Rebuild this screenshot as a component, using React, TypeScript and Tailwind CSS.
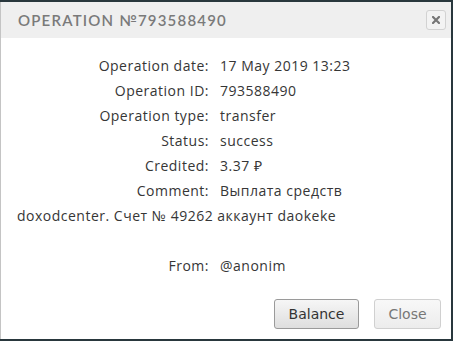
import React from "react";

const rows: [string, string][] = [
  ["Operation date:", "17 May 2019 13:23"],
  ["Operation ID:", "793588490"],
  ["Operation type:", "transfer"],
  ["Status:", "success"],
  ["Credited:", "3.37 ₽"],
];

export default function App() {
  return (
    <div className="w-[453px] h-[341px] bg-[#29373d] pt-[2px] pr-[2px] pb-[2px]">
      <div className="h-full bg-white border-l border-[#c4c4c4] flex flex-col">
        <div className="h-[36px] bg-[#efefef] flex items-center justify-between pl-[17px] pr-[5px]">
          <div
            className="text-[15px] font-semibold tracking-[1.2px] text-[#7a7a7a]"
            style={{ fontFamily: "Lato, 'DejaVu Sans', sans-serif" }}
          >
            OPERATION №793588490
          </div>
          <div className="w-[20px] h-[20px] border border-[#d2d2d2] rounded-[3px] bg-[#f3f3f3] flex items-center justify-center">
            <svg width="8" height="8" viewBox="0 0 8 8">
              <path d="M1 1 L7 7 M7 1 L1 7" stroke="#777" strokeWidth="2.2" strokeLinecap="square" />
            </svg>
          </div>
        </div>
        <div
          className="pt-[15px] pl-[16px] pr-[12px] text-[14px] leading-[25px] tracking-[0.5px] text-[#363636]"
          style={{ fontFamily: "'Open Sans', sans-serif" }}
        >
          {rows.map(([l, v]) => (
            <div key={l}>
              <span className="inline-block w-[192px] text-right mr-[11px]">{l}</span>
              <span>{v}</span>
            </div>
          ))}
          <div>
            <span className="inline-block w-[192px] text-right mr-[11px]">Comment:</span>
            <span>Выплата средств</span>{" "}
            <span>doxodcenter. Счет № 49262 аккаунт daokeke</span>
          </div>
          <div className="h-[25px]" />
          <div>
            <span className="inline-block w-[192px] text-right mr-[11px]">From:</span>
            <span>@anonim</span>
          </div>
        </div>
        <div className="mt-auto flex justify-end gap-[15px] pr-[10px] pb-[10px]">
          <button
            className="h-[30px] w-[85px] rounded-[3px] border border-[#9a9a9a] bg-gradient-to-b from-[#f6f6f6] to-[#dedede] text-[14px] text-[#333]"
            style={{ fontFamily: "'DejaVu Sans', Verdana, sans-serif" }}
          >
            Balance
          </button>
          <button
            className="h-[30px] w-[67px] rounded-[3px] border border-[#d0d0d0] bg-gradient-to-b from-[#f8f8f8] to-[#ececec] text-[14px] text-[#777]"
            style={{ fontFamily: "'DejaVu Sans', Verdana, sans-serif" }}
          >
            Close
          </button>
        </div>
      </div>
    </div>
  );
}
